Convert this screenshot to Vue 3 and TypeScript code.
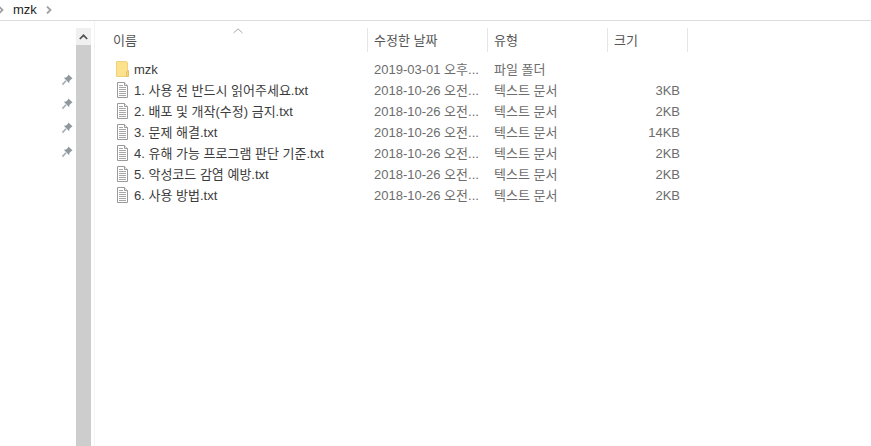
<script setup lang="ts">
interface FileRow {
  name: string
  date: string
  kind: string
  size: string
  folder?: boolean
}

const rows: FileRow[] = [
  { name: 'mzk', date: '2019-03-01 오후...', kind: '파일 폴더', size: '', folder: true },
  { name: '1. 사용 전 반드시 읽어주세요.txt', date: '2018-10-26 오전...', kind: '텍스트 문서', size: '3KB' },
  { name: '2. 배포 및 개작(수정) 금지.txt', date: '2018-10-26 오전...', kind: '텍스트 문서', size: '2KB' },
  { name: '3. 문제 해결.txt', date: '2018-10-26 오전...', kind: '텍스트 문서', size: '14KB' },
  { name: '4. 유해 가능 프로그램 판단 기준.txt', date: '2018-10-26 오전...', kind: '텍스트 문서', size: '2KB' },
  { name: '5. 악성코드 감염 예방.txt', date: '2018-10-26 오전...', kind: '텍스트 문서', size: '2KB' },
  { name: '6. 사용 방법.txt', date: '2018-10-26 오전...', kind: '텍스트 문서', size: '2KB' },
]

const pins = [1, 2, 3, 4]
</script>

<template>
  <div class="window">
    <!-- 주소 표시줄 -->
    <div class="address">
      <svg class="crumb first" width="6" height="8" viewBox="0 0 6 8">
        <path d="M1 0.5 L4.5 4 L1 7.5" fill="none" stroke="#a0a0a0" stroke-width="1.8" />
      </svg>
      <span class="crumb-text">mzk</span>
      <svg class="crumb" width="6" height="8" viewBox="0 0 6 8">
        <path d="M1 0.5 L4.5 4 L1 7.5" fill="none" stroke="#a0a0a0" stroke-width="1.8" />
      </svg>
    </div>

    <div class="body">
      <!-- 탐색 창 -->
      <div class="nav">
        <svg v-for="pin in pins" :key="pin" class="pin" width="12" height="12" viewBox="0 0 12 12">
          <path d="M7.4 0.6 L11.6 4.6 L10.2 5.2 L8.4 7 L8.2 9.2 L2.8 3.8 L5 3.6 L6.8 1.9 Z" fill="#8f989e" />
          <path d="M5 6.8 L1.4 10.6" fill="none" stroke="#a6acb0" stroke-width="1.6" />
        </svg>
      </div>

      <div class="scrollbar">
        <div class="scroll-btn">
          <svg width="9" height="6" viewBox="0 0 9 6">
            <path d="M0.8 5 L4.5 1.3 L8.2 5" fill="none" stroke="#505050" stroke-width="1.7" />
          </svg>
        </div>
        <div class="scroll-thumb"></div>
      </div>

      <!-- 파일 목록 -->
      <div class="list">
        <div class="sort-mark">
          <svg width="10" height="6" viewBox="0 0 10 6">
            <path d="M0.5 5 L5 0.8 L9.5 5" fill="none" stroke="#a8a8a8" stroke-width="1" />
          </svg>
        </div>
        <div class="header row-grid">
          <div class="col name-col">이름</div>
          <div class="col">수정한 날짜</div>
          <div class="col">유형</div>
          <div class="col">크기</div>
        </div>
        <div v-for="row in rows" :key="row.name" class="row row-grid">
          <div class="name-cell">
            <svg v-if="row.folder" class="icon" width="16" height="17" viewBox="0 0 16 17">
              <path d="M1.5 0.5 H11.5 L12.5 1.5 V15.5 H1.5 Z" fill="#fde28e" stroke="#efd07c" stroke-width="1" />
              <path d="M11.5 10.5 L13.5 9.5 V15.5 H11.5 Z" fill="#f8d676" stroke="#e6c264" stroke-width="1" />
            </svg>
            <svg v-else class="icon" width="16" height="17" viewBox="0 0 16 17">
              <path d="M2.5 0.5 H9.5 L12.5 3.5 V15.5 H2.5 Z" fill="#fff" stroke="#9a9a9a" stroke-width="1" />
              <path d="M9.5 0.5 V3.5 H12.5" fill="#eee" stroke="#9a9a9a" stroke-width="1" />
              <path d="M4 3.5 H8 M4 5.5 H11 M4 7.5 H11 M4 9.5 H11 M4 11.5 H11 M4 13.5 H11" stroke="#a6a6a6" stroke-width="1" />
            </svg>
            <span class="file-name">{{ row.name }}</span>
          </div>
          <div class="cell">{{ row.date }}</div>
          <div class="cell">{{ row.kind }}</div>
          <div class="cell size">{{ row.size }}</div>
        </div>
      </div>
    </div>
  </div>
</template>

<style>
html,
body {
  margin: 0;
  background: #fff;
  overflow: hidden;
}
</style>

<style scoped>
.window {
  width: 871px;
  height: 446px;
  display: flex;
  flex-direction: column;
  font-family: "Liberation Sans", "Noto Sans CJK KR", sans-serif;
  font-size: 13px;
  background: #fff;
  overflow: hidden;
}

.address {
  height: 21px;
  flex-shrink: 0;
  box-sizing: border-box;
  border-bottom: 1px solid #dcdcdc;
  display: flex;
  align-items: center;
  color: #1e1e1e;
  font-size: 13px;
  padding-left: 13px;
  position: relative;
}

.crumb-text {
  margin-right: 9px;
  line-height: 20px;
}

.crumb.first {
  position: absolute;
  left: -2px;
  top: 6px;
}

.body {
  flex: 1;
  display: flex;
  min-height: 0;
}

.nav {
  width: 76px;
  flex-shrink: 0;
  box-sizing: border-box;
  padding-top: 53px;
  padding-left: 61px;
  display: flex;
  flex-direction: column;
  gap: 12px;
}

.pin {
  display: block;
}

.scrollbar {
  width: 15px;
  flex-shrink: 0;
  margin-top: 7px;
  display: flex;
  flex-direction: column;
  background: #f0f0f0;
}

.scroll-btn {
  height: 17px;
  display: flex;
  align-items: center;
  justify-content: center;
}

.scroll-thumb {
  flex: 1;
  background: #cdcdcd;
}

.list {
  flex: 1;
  margin-left: 3px;
  border-left: 1px solid #f4f4f4;
  position: relative;
  padding-top: 7px;
}

.sort-mark {
  position: absolute;
  left: 138px;
  top: 7px;
  line-height: 0;
}

.row-grid {
  display: grid;
  grid-template-columns: 273px 120px 120px 80px;
}

.header {
  height: 24px;
  margin-bottom: 7px;
  color: #555;
}

.col {
  box-sizing: border-box;
  height: 24px;
  line-height: 26px;
  padding-left: 6px;
  border-right: 1px solid #e5e5e5;
}

.name-col {
  padding-left: 18px;
}

.row {
  height: 21px;
  align-items: center;
  color: #6d6d6d;
}

.name-cell {
  display: flex;
  align-items: center;
  padding-left: 20px;
  color: #3c3c3c;
}

.icon {
  flex-shrink: 0;
  margin-right: 3px;
}

.file-name {
  white-space: nowrap;
  line-height: 21px;
}

.cell {
  padding-left: 6px;
  white-space: nowrap;
  line-height: 21px;
}

.size {
  text-align: right;
  padding-right: 8px;
}
</style>
